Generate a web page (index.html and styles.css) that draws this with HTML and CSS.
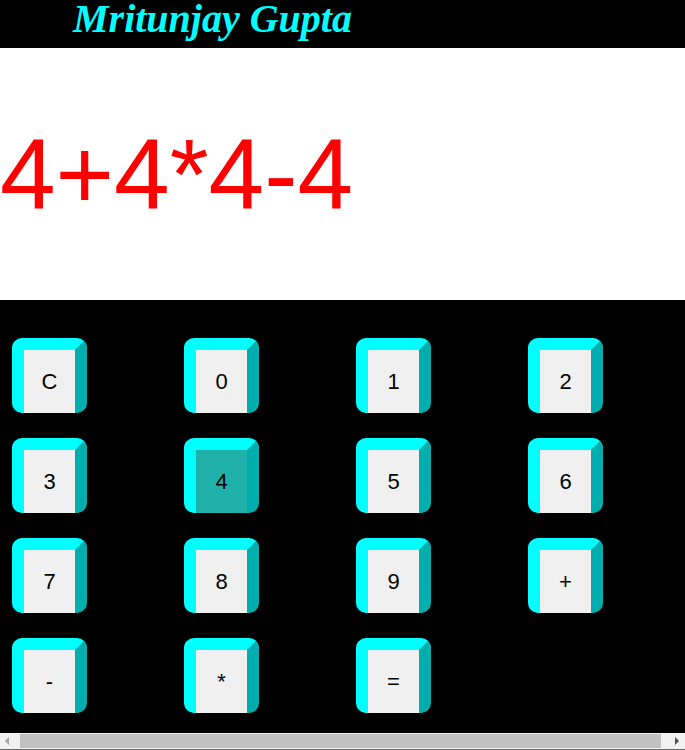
FILE: index.html
```html
<!DOCTYPE html>
<html>
<head>
<meta charset="utf-8">
<title>Calculator</title>
<link rel="stylesheet" href="styles.css">
</head>
<body>
<div class="page">
  <header class="header">Mritunjay Gupta</header>
  <div class="display">4+4*4-4</div>
  <div class="keys">
    <button class="key">C</button>
    <button class="key">0</button>
    <button class="key">1</button>
    <button class="key">2</button>
    <button class="key">3</button>
    <button class="key active">4</button>
    <button class="key">5</button>
    <button class="key">6</button>
    <button class="key">7</button>
    <button class="key">8</button>
    <button class="key">9</button>
    <button class="key">+</button>
    <button class="key">-</button>
    <button class="key">*</button>
    <button class="key">=</button>
  </div>
</div>
<div class="hscroll" aria-hidden="true">
  <span class="arrow arrow-left"></span>
  <span class="thumb"></span>
  <span class="arrow arrow-right"></span>
</div>
</body>
</html>
```
FILE: styles.css
```css
html, body {
  margin: 0;
  padding: 0;
  background: #000;
}
.page {
  width: 685px;
}
.header {
  height: 48px;
  box-sizing: border-box;
  padding-left: 73px;
  background: #000;
  color: #00ffff;
  font-family: "Liberation Serif", "Times New Roman", serif;
  font-style: italic;
  font-weight: bold;
  font-size: 40px;
  line-height: 38px;
}
.display {
  height: 252px;
  box-sizing: border-box;
  padding-top: 76px;
  background: #fff;
  color: #ff0000;
  font-family: "Liberation Sans", Arial, sans-serif;
  font-size: 100px;
  line-height: 100px;
  white-space: nowrap;
}
.keys {
  display: grid;
  grid-template-columns: repeat(4, 172px);
  row-gap: 25px;
  padding: 38px 0 37px 12px;
  background: #000;
}
.key {
  width: 75px;
  height: 75px;
  box-sizing: border-box;
  margin: 0;
  padding: 0;
  border-style: solid;
  border-width: 12px 12px 0 12px;
  border-color: #00ffff #00adad #00ffff #00ffff;
  border-radius: 10px;
  background: #f0f0f0;
  color: #000;
  font-family: "Liberation Sans", Arial, sans-serif;
  font-size: 22px;
  line-height: 1;
}
.key.active {
  background: #20b2aa;
}
.hscroll {
  position: fixed;
  left: 0;
  right: 0;
  bottom: 0;
  height: 16px;
  background: #f1f1f1;
  display: flex;
  align-items: center;
  border-bottom: 1px solid #6a6a6a;
}
.arrow {
  width: 20px;
  height: 16px;
  display: flex;
  align-items: center;
  justify-content: center;
  flex: none;
}
.arrow::before {
  content: "";
  border-style: solid;
  border-color: transparent;
  border-width: 4px;
}
.arrow-left::before {
  border-right-color: #a3a3a3;
  border-left-width: 0;
  margin-left: -6px;
}
.arrow-right::before {
  border-left-color: #505050;
  border-right-width: 0;
  margin-left: 8px;
}
.thumb {
  flex: 1;
  height: 14px;
  background: #c1c1c1;
}
.arrow-right {
  width: 24px;
}
```
